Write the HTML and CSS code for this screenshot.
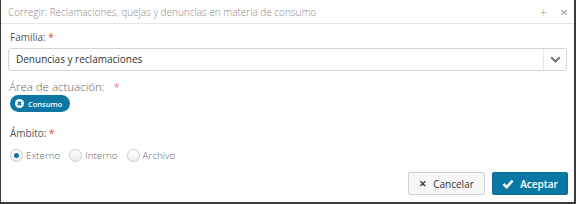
FILE: index.html
```html
<!DOCTYPE html>
<html lang="es">
<head>
    <meta charset="UTF-8">
    <title>Corregir</title>
    <link rel="stylesheet" href="styles.css">
</head>
<body>
    <div class="dialog">
        <div class="dialog-header">
            <span class="dialog-title">Corregir: Reclamaciones, quejas y denuncias en materia de consumo</span>
            <span class="header-tools">
                <span class="tool">+</span>
                <span class="tool close">&#x2715;</span>
            </span>
        </div>
        <div class="dialog-body">
            <div class="field">
                <label class="field-label">Familia: <span class="req">*</span></label>
                <div class="select">
                    <span class="select-value">Denuncias y reclamaciones</span>
                    <span class="select-arrow">
                        <svg width="11" height="7" viewBox="0 0 11 7"><path d="M1.2 1.2 L5.5 5.5 L9.8 1.2" fill="none" stroke="#777" stroke-width="2"/></svg>
                    </span>
                </div>
            </div>
            <div class="field">
                <label class="field-label light">Área de actuación: <span class="req wide">*</span></label>
                <div class="chips">
                    <span class="chip">
                        <svg width="9" height="9" viewBox="0 0 10 10"><circle cx="5" cy="5" r="5" fill="#fff"/><path d="M3.2 3.2 L6.8 6.8 M6.8 3.2 L3.2 6.8" stroke="#0e76a3" stroke-width="1.7"/></svg>
                        Consumo
                    </span>
                </div>
            </div>
            <div class="field">
                <label class="field-label">Ámbito: <span class="req">*</span></label>
                <div class="radios">
                    <label class="radio checked"><span class="dot"></span>Externo</label>
                    <label class="radio"><span class="dot"></span>Interno</label>
                    <label class="radio"><span class="dot"></span>Archivo</label>
                </div>
            </div>
        </div>
        <div class="dialog-footer">
            <button class="btn btn-default"><span class="btn-icon">&#x2715;</span>Cancelar</button>
            <button class="btn btn-primary">
                <svg width="12" height="10" viewBox="0 0 13 11"><path d="M1.5 5.5 L5 9 L11.5 1.8" fill="none" stroke="#fff" stroke-width="2.8"/></svg>
                Aceptar
            </button>
        </div>
    </div>
</body>
</html>
```

FILE: styles.css
```css
html, body {
    margin: 0;
    padding: 0;
    background-color: #3b3b3b;
    height: 204px;
    overflow: hidden;
}

body {
    font-family: 'Open Sans', 'Liberation Sans', sans-serif;
    color: #555;
}

.dialog {
    box-sizing: border-box;
    width: 573px;
    height: 202px;
    margin-left: 1px;
    background-color: #fff;
    display: flex;
    flex-direction: column;
}

.dialog-header {
    height: 24px;
    flex: none;
    border-bottom: 1px solid #e5e5e5;
    display: flex;
    align-items: center;
    justify-content: space-between;
    padding: 0 6px 0 7px;
    box-sizing: border-box;
}

.dialog-title {
    font-size: 10px;
    font-weight: 300;
    color: #8a8a8a;
}

.header-tools {
    display: flex;
    align-items: center;
    gap: 13px;
    color: #a0a0a0;
    font-size: 13px;
    font-weight: 300;
    line-height: 14px;
}

.tool.close {
    font-size: 10px;
}

.dialog-body {
    padding: 6px 7px 0 7px;
}

.field-label {
    display: block;
    font-size: 10px;
    line-height: 14px;
    color: #555;
    margin: 0 0 4px 2px;
}

.field-label.light {
    font-size: 11.5px;
    line-height: 16px;
    font-weight: 300;
    color: #666;
    margin: 0 0 0 1px;
}

.req {
    color: #e04040;
}

.req.wide {
    margin-left: 6px;
}

.select {
    display: flex;
    align-items: stretch;
    height: 23px;
    border: 1px solid #d4d4d4;
    border-radius: 3px;
    box-sizing: border-box;
    margin-bottom: 8px;
}

.select-value {
    flex: 1;
    font-size: 10px;
    color: #333;
    padding-left: 7px;
    line-height: 21px;
}

.select-arrow {
    width: 22px;
    border-left: 1px solid #e5e5e5;
    display: flex;
    align-items: center;
    justify-content: center;
}

.chips {
    display: flex;
    margin-bottom: 14px;
}

.chip {
    display: inline-flex;
    align-items: center;
    gap: 4px;
    height: 17px;
    padding: 0 8px 0 5px;
    margin-left: 2px;
    border-radius: 9px;
    background-color: #0e76a3;
    color: #fff;
    font-size: 7.5px;
    font-weight: 600;
}

.radios {
    display: flex;
    gap: 9px;
    margin-top: 8px;
    height: 14px;
}

.radio {
    display: flex;
    align-items: center;
    gap: 3px;
    font-size: 9.8px;
    font-weight: 300;
    color: #666;
}

.dot {
    width: 11px;
    height: 11px;
    border: 1px solid #c8c8c8;
    border-radius: 50%;
    background: linear-gradient(#fff, #eee);
    margin-left: 2px;
    position: relative;
}

.radios .radio + .radio .dot {
    margin-left: 0;
}

.radio.checked .dot::after {
    content: "";
    position: absolute;
    left: 3px;
    top: 3px;
    width: 5px;
    height: 5px;
    border-radius: 50%;
    background-color: #0e76a3;
}

.dialog-footer {
    margin-top: auto;
    display: flex;
    justify-content: flex-end;
    gap: 7px;
    padding: 0 6px 7px 0;
}

.btn {
    height: 23px;
    box-sizing: border-box;
    border-radius: 2px;
    font-family: inherit;
    font-size: 10px;
    display: inline-flex;
    align-items: center;
    justify-content: center;
    gap: 6px;
    padding: 0;
}

.btn-default {
    width: 77px;
    background-color: #f7f7f7;
    border: 1px solid #cfcfcf;
    color: #333;
}

.btn-icon {
    font-size: 9px;
    font-weight: bold;
}

.btn-primary {
    width: 76px;
    background-color: #0b78a4;
    border: 1px solid #0a6e96;
    color: #fff;
    font-weight: 600;
}
```
